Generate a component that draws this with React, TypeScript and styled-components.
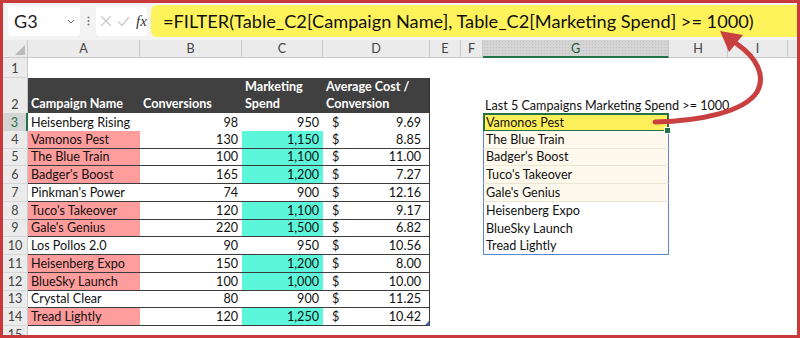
import React from "react";
import styled, { createGlobalStyle, css } from "styled-components";

type Campaign = { name: string; conv: number; spend: string; cost: string };

const campaigns: Campaign[] = [
  { name: "Heisenberg Rising", conv: 98, spend: "950", cost: "9.69" },
  { name: "Vamonos Pest", conv: 130, spend: "1,150", cost: "8.85" },
  { name: "The Blue Train", conv: 100, spend: "1,100", cost: "11.00" },
  { name: "Badger's Boost", conv: 165, spend: "1,200", cost: "7.27" },
  { name: "Pinkman's Power", conv: 74, spend: "900", cost: "12.16" },
  { name: "Tuco's Takeover", conv: 120, spend: "1,100", cost: "9.17" },
  { name: "Gale's Genius", conv: 220, spend: "1,500", cost: "6.82" },
  { name: "Los Pollos 2.0", conv: 90, spend: "950", cost: "10.56" },
  { name: "Heisenberg Expo", conv: 150, spend: "1,200", cost: "8.00" },
  { name: "BlueSky Launch", conv: 100, spend: "1,000", cost: "10.00" },
  { name: "Crystal Clear", conv: 80, spend: "900", cost: "11.25" },
  { name: "Tread Lightly", conv: 120, spend: "1,250", cost: "10.42" },
];

const isHit = (c: Campaign) => parseInt(c.spend.replace(",", ""), 10) >= 1000;
const results = campaigns.filter(isHit).map((c) => c.name);

const COLS = "25px 112px 102px 81px 107px 31px 22px 186px 59px 60px 1fr";
const LETTERS = ["A", "B", "C", "D", "E", "F", "G", "H", "I", ""];
const ROW_H = 17.75;
const GREEN = "#217346";
const SPILL = "#5b87d2";

const GlobalStyle = createGlobalStyle`
  html, body { margin: 0; padding: 0; background: #fff; }
  body { font-family: Lato, "Liberation Sans", sans-serif; }
`;

const Frame = styled.div`
  position: relative;
  width: 800px;
  height: 338px;
  box-sizing: border-box;
  border: 3px solid #c8393b;
  overflow: hidden;
  background: #fff;
  display: flex;
  flex-direction: column;
`;

const FormulaBar = styled.div`
  flex: none;
  height: 37px;
  display: flex;
  align-items: flex-start;
  background: #f3f3f3;
  padding-left: 5px;
  box-sizing: border-box;
`;

const NameBox = styled.div`
  margin-top: 3px;
  width: 72px;
  height: 30px;
  box-sizing: border-box;
  background: #fff;
  border-radius: 4px;
  display: flex;
  align-items: center;
  justify-content: space-between;
  padding: 0 5px 0 6px;
  font-size: 18px;
  color: #222;
`;

const Dots = styled.div`
  width: 16px;
  height: 36px;
  display: flex;
  align-items: center;
  justify-content: center;
`;

const FxBox = styled.div`
  margin-top: 3px;
  width: 51px;
  height: 30px;
  box-sizing: border-box;
  background: #fff;
  border-radius: 4px;
  display: flex;
  align-items: center;
  gap: 5px;
  padding-left: 4px;
`;

const FxLabel = styled.span`
  font-family: "Liberation Serif", serif;
  font-style: italic;
  font-size: 15px;
  color: #333;
  margin-left: 1px;
`;

const Formula = styled.div`
  margin: 2px 0 0 4px;
  flex: 1;
  height: 32px;
  background: #fff35c;
  border-radius: 6px 0 0 6px;
  padding-left: 12px;
  font-size: 18.2px;
  line-height: 32px;
  color: #111;
  white-space: nowrap;
  overflow: hidden;
`;

const SheetRow = styled.div<{ $h: number }>`
  flex: none;
  display: grid;
  grid-template-columns: ${COLS};
  height: ${(p) => p.$h}px;
  font-size: 12.6px;
  color: #111;
`;

const Corner = styled.div`
  position: relative;
  background: #ebebeb;
  border-right: 1px solid #c9c9c9;
  border-bottom: 1px solid #c9c9c9;
  &::after {
    content: "";
    position: absolute;
    right: 2px;
    bottom: 2px;
    border-style: solid;
    border-width: 0 0 10px 10px;
    border-color: transparent transparent #bcbcbc transparent;
  }
`;

const ColHead = styled.div<{ $active?: boolean; $open?: boolean }>`
  box-sizing: border-box;
  background: #ebebeb;
  border-right: ${(p) => (p.$open ? "none" : "1px solid #c9c9c9")};
  border-bottom: 1px solid #c9c9c9;
  display: flex;
  align-items: center;
  justify-content: center;
  color: #444;
  ${(p) =>
    p.$active &&
    css`
      background: #d4d4d4 radial-gradient(#c2c2c2 0.6px, transparent 0.8px) 0 0 / 3px 3px;
      border-bottom: 2px solid ${GREEN};
      color: #1d5b38;
    `}
`;

const RowHead = styled.div<{ $active?: boolean }>`
  box-sizing: border-box;
  background: #ebebeb;
  border-right: 1px solid #c9c9c9;
  border-bottom: 1px solid #d6d6d6;
  display: flex;
  align-items: flex-end;
  justify-content: center;
  padding-bottom: 1px;
  color: #444;
  ${(p) =>
    p.$active &&
    css`
      background: #d4d4d4;
      border-right: 2px solid ${GREEN};
      color: ${GREEN};
    `}
`;

const Blank = styled.div``;

const TableHead = styled.div<{ $edge?: boolean }>`
  background: #404040;
  color: #fff;
  font-weight: 700;
  display: flex;
  align-items: flex-end;
  padding: 0 3px 1px;
  line-height: 17.5px;
  ${(p) => p.$edge && css`border-right: 1px solid #2e2e2e;`}
`;

const DataCell = styled.div<{ $fill?: string; $right?: boolean }>`
  box-sizing: border-box;
  background: ${(p) => p.$fill || "#fff"};
  border-bottom: 1px solid #3c3c3c;
  display: flex;
  align-items: center;
  padding: 0 4px 0 3px;
  white-space: nowrap;
  ${(p) => p.$right && css`justify-content: flex-end;`}
`;

const CostCell = styled(DataCell)<{ $last?: boolean }>`
  position: relative;
  justify-content: space-between;
  padding: 0 8px 0 9px;
  border-right: 1px solid #3c3c3c;
  ${(p) =>
    p.$last &&
    css`
      &::after {
        content: "";
        position: absolute;
        right: 0;
        bottom: 0;
        border-style: solid;
        border-width: 0 0 4px 4px;
        border-color: transparent transparent #3d6fc0 transparent;
      }
    `}
`;

const Caption = styled.div`
  display: flex;
  align-items: flex-end;
  padding: 0 0 1px 2px;
  white-space: nowrap;
  overflow: visible;
`;

type ResultKind = "selected" | "cream" | "plain" | "last";

const ResultCell = styled.div<{ $kind: ResultKind }>`
  position: relative;
  box-sizing: border-box;
  display: flex;
  align-items: center;
  padding-left: 2px;
  white-space: nowrap;
  border-left: 1px solid ${SPILL};
  border-right: 1px solid ${SPILL};
  ${(p) =>
    p.$kind === "selected" &&
    css`
      background: #ffef5a;
      border: 2px solid ${GREEN};
      padding-left: 1px;
      &::after {
        content: "";
        position: absolute;
        right: -4px;
        bottom: -4px;
        width: 5px;
        height: 5px;
        background: ${GREEN};
        border: 1px solid #fff;
        z-index: 2;
      }
    `}
  ${(p) =>
    p.$kind === "cream" &&
    css`
      background: #fef9ed;
      border-bottom: 1px solid #ece5d4;
    `}
  ${(p) => p.$kind === "last" && css`border-bottom: 1px solid ${SPILL};`}
`;

const Arrow = styled.svg`
  position: absolute;
  top: -3px;
  left: -3px;
  pointer-events: none;
`;

const resultKind = (i: number): ResultKind => {
  if (i === 0) return "selected";
  if (i < 5) return "cream";
  if (i === results.length - 1) return "last";
  return "plain";
};

const Empties: React.FC<{ n: number }> = ({ n }) => (
  <>
    {Array.from({ length: n }, (_, k) => (
      <Blank key={k} />
    ))}
  </>
);

const App: React.FC = () => {
  return (
    <>
      <GlobalStyle />
      <Frame>
        <FormulaBar>
          <NameBox>
            <span>G3</span>
            <svg width="8" height="5" viewBox="0 0 8 5">
              <path d="M1 1l3 3 3-3" fill="none" stroke="#666" strokeWidth="1" />
            </svg>
          </NameBox>
          <Dots>
            <svg width="3" height="10" viewBox="0 0 3 10">
              <circle cx="1.5" cy="1.5" r="1" fill="#777" />
              <circle cx="1.5" cy="5" r="1" fill="#777" />
              <circle cx="1.5" cy="8.5" r="1" fill="#777" />
            </svg>
          </Dots>
          <FxBox>
            <svg width="12" height="12" viewBox="0 0 12 12">
              <path d="M1 1l10 10M11 1L1 11" stroke="#c8c8c8" strokeWidth="1.2" />
            </svg>
            <svg width="13" height="12" viewBox="0 0 13 12">
              <path d="M1 6.5l4 4L12 2" fill="none" stroke="#c8c8c8" strokeWidth="1.2" />
            </svg>
            <FxLabel>fx</FxLabel>
          </FxBox>
          <Formula>=FILTER(Table_C2[Campaign Name], Table_C2[Marketing Spend] &gt;= 1000)</Formula>
        </FormulaBar>

        <SheetRow $h={18}>
          <Corner />
          {LETTERS.map((l) => (
            <ColHead key={l || "end"} $active={l === "G"} $open={!l}>
              {l}
            </ColHead>
          ))}
        </SheetRow>

        <SheetRow $h={19.5}>
          <RowHead>1</RowHead>
          <Empties n={10} />
        </SheetRow>

        <SheetRow $h={35.5}>
          <RowHead>2</RowHead>
          <TableHead>Campaign Name</TableHead>
          <TableHead>Conversions</TableHead>
          <TableHead>
            Marketing
            <br />
            Spend
          </TableHead>
          <TableHead $edge>
            Average Cost /
            <br />
            Conversion
          </TableHead>
          <Empties n={2} />
          <Caption>Last 5 Campaigns Marketing Spend &gt;= 1000</Caption>
          <Empties n={3} />
        </SheetRow>

        {campaigns.map((c, i) => {
          const hit = isHit(c);
          return (
            <SheetRow key={c.name} $h={ROW_H}>
              <RowHead $active={i === 0}>{i + 3}</RowHead>
              <DataCell $fill={hit ? "#ff9c9c" : undefined}>{c.name}</DataCell>
              <DataCell $right>{c.conv}</DataCell>
              <DataCell $right $fill={hit ? "#5cf6da" : undefined}>
                {c.spend}
              </DataCell>
              <CostCell $last={i === campaigns.length - 1}>
                <span>$</span>
                <span>{c.cost}</span>
              </CostCell>
              <Empties n={2} />
              {i < results.length ? (
                <ResultCell $kind={resultKind(i)}>{results[i]}</ResultCell>
              ) : (
                <Blank />
              )}
              <Empties n={3} />
            </SheetRow>
          );
        })}

        <SheetRow $h={ROW_H}>
          <RowHead>15</RowHead>
          <Empties n={10} />
        </SheetRow>

        <Arrow width="800" height="338" viewBox="0 0 800 338">
          <path
            d="M655 122 C700 121 744 112 757 92 C766 76 757 58 737 44"
            fill="none"
            stroke="#c8403f"
            strokeWidth="5"
            strokeLinecap="round"
          />
          <polygon points="720,31 743,35 729,52" fill="#c8403f" />
        </Arrow>
      </Frame>
    </>
  );
};

export default App;
